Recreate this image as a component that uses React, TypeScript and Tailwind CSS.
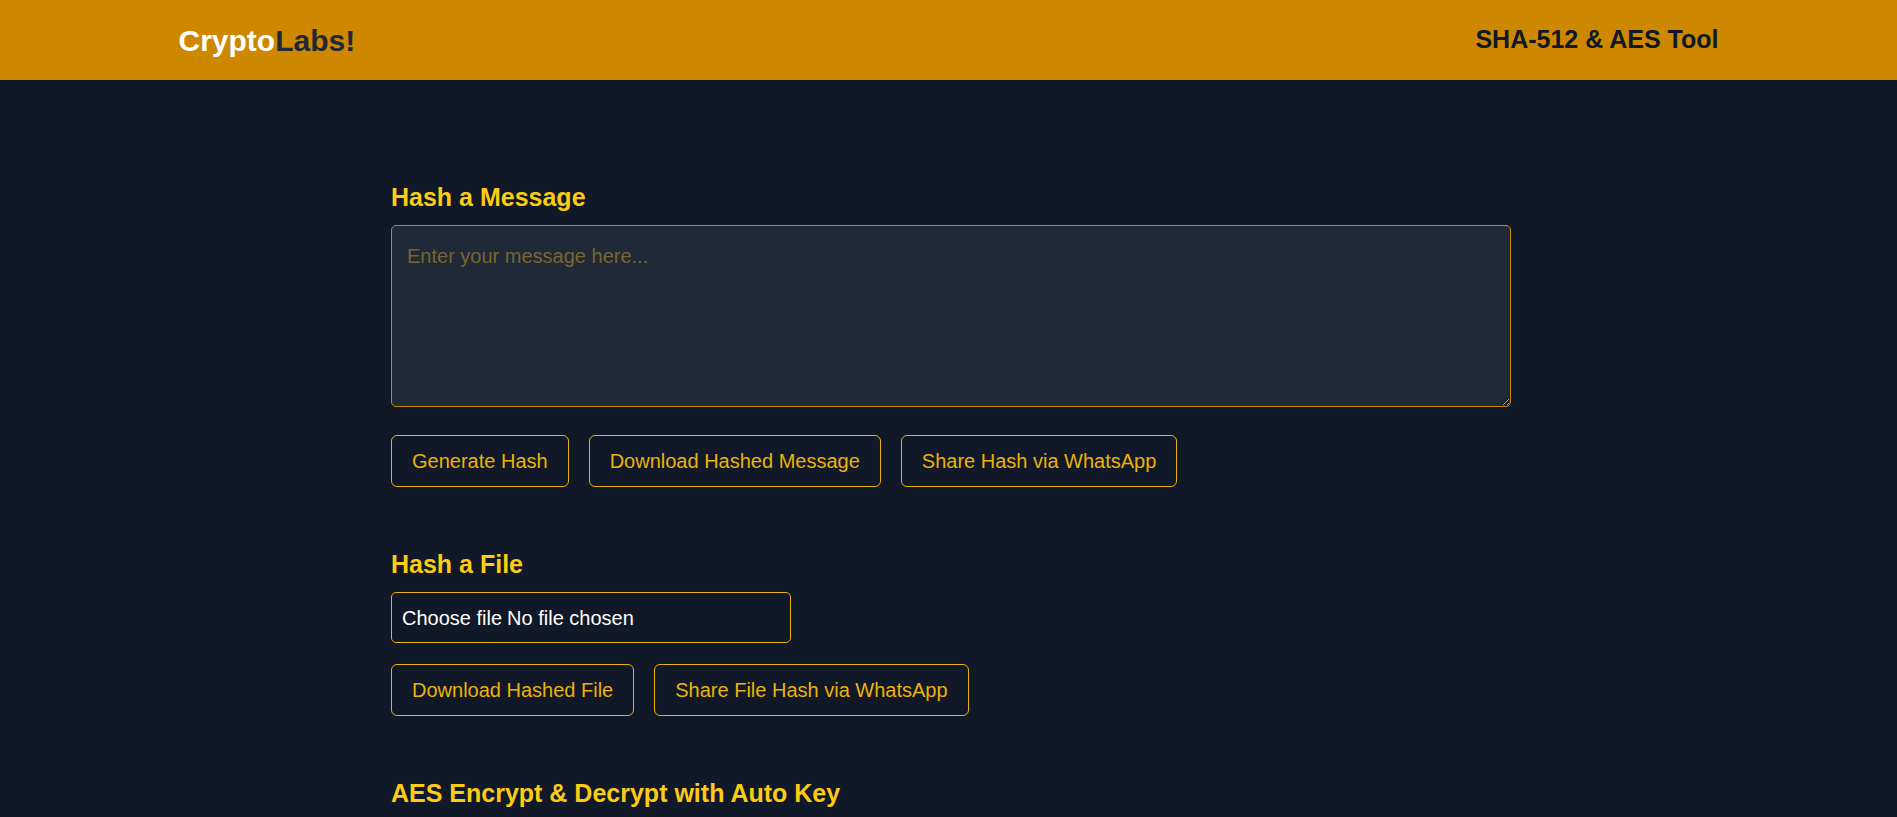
import React from "react";

const btn =
  "border border-[#eab308] rounded-[6px] px-5 py-[10px] text-[20px] leading-[30px] text-[#eab308] bg-transparent hover:bg-[#eab308] hover:text-[#111827] cursor-pointer";

const heading = "text-[25px] leading-[35px] font-bold text-[#facc15] mb-[10px]";

const App = () => {
  return (
    <div className="min-h-screen bg-[#111827] font-['Liberation_Sans',Arial,sans-serif]">
      <header className="bg-[#cd8800] h-20">
        <div className="max-w-[1600px] mx-auto px-[30px] h-full flex items-center justify-between">
          <div className="text-[30px] font-bold">
            <span className="text-white">Crypto</span>
            <span className="text-[#1f2937]">Labs!</span>
          </div>
          <div className="text-[25px] font-bold text-[#111827]">SHA-512 &amp; AES Tool</div>
        </div>
      </header>

      <main className="w-[1125px] mx-auto pl-[5px] pt-[100px] pb-20">
        <section>
          <h2 className={heading}>Hash a Message</h2>
          <textarea
            className="block w-full h-[182px] p-[15px] text-[20px] leading-[30px] bg-[#1f2937] text-white border border-[#ca8a04] rounded-[5px] outline-none placeholder:text-[#7a6630]"
            placeholder="Enter your message here..."
          />
          <div className="flex gap-5 mt-[28px]">
            <button className={btn}>Generate Hash</button>
            <button className={btn}>Download Hashed Message</button>
            <button className={btn}>Share Hash via WhatsApp</button>
          </div>
        </section>

        <section className="mt-[60px]">
          <h2 className={heading}>Hash a File</h2>
          <label className="flex items-center w-[400px] h-[51px] px-[10px] text-[20px] leading-[30px] text-white border border-[#eab308] rounded-[5px] cursor-pointer">
            <input type="file" className="hidden" />
            <span>Choose file</span>
            <span className="ml-[5px]">No file chosen</span>
          </label>
          <div className="flex gap-5 mt-[21px]">
            <button className={btn}>Download Hashed File</button>
            <button className={btn}>Share File Hash via WhatsApp</button>
          </div>
        </section>

        <section className="mt-[60px]">
          <h2 className={heading}>AES Encrypt &amp; Decrypt with Auto Key</h2>
          <textarea
            className="block w-full h-[182px] p-[15px] text-[20px] leading-[30px] bg-[#1f2937] text-white border border-[#ca8a04] rounded-[5px] outline-none placeholder:text-[#7a6630]"
            placeholder="Enter text to encrypt..."
          />
        </section>
      </main>
    </div>
  );
};

export default App;
